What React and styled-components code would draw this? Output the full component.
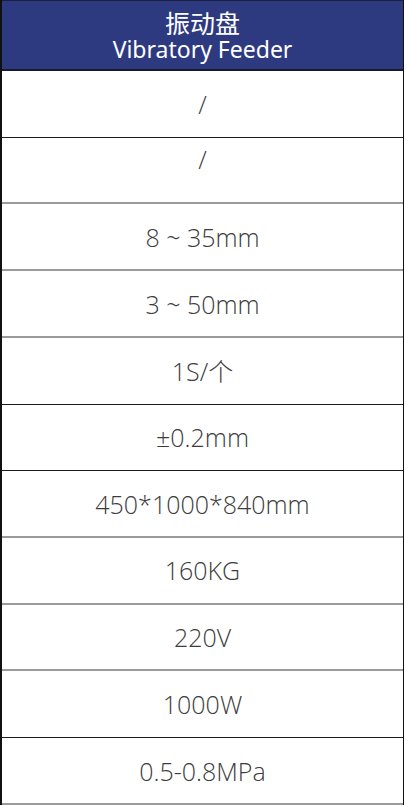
import React from "react";
import styled, { createGlobalStyle } from "styled-components";

const rows = [
  { value: "/", line: "dark" },
  { value: "/", line: "gray", top: true },
  { value: "8 ~ 35mm", line: "gray" },
  { value: "3 ~ 50mm", line: "gray" },
  { value: "1S/个", line: "dark" },
  { value: "±0.2mm", line: "dark" },
  { value: "450*1000*840mm", line: "gray" },
  { value: "160KG", line: "gray" },
  { value: "220V", line: "gray" },
  { value: "1000W", line: "dark" },
  { value: "0.5-0.8MPa", line: "gray" },
];

class App extends React.Component {
  render() {
    return (
      <>
        <GlobalStyle />
        <Table>
          <Header>
            <HeaderCn>振动盘</HeaderCn>
            <HeaderEn>Vibratory Feeder</HeaderEn>
          </Header>
          {rows.map((row, i) => (
            <Row key={i} $line={row.line} $top={row.top}>
              {row.value}
            </Row>
          ))}
        </Table>
      </>
    );
  }
}

const GlobalStyle = createGlobalStyle`
  body {
    margin: 0;
    background: #ffffff;
    font-family: "Noto Sans", "Noto Sans CJK SC", sans-serif;
  }
`;

const Table = styled.div`
  width: 404px;
  box-sizing: border-box;
  border-left: 2px solid #111111;
  border-right: 1px solid #111111;
  display: flex;
  flex-direction: column;
`;

const Header = styled.div`
  height: 71px;
  box-sizing: border-box;
  background: #2e3a80;
  border-top: 1px solid #1a1f40;
  border-bottom: 2px solid #151a33;
  display: flex;
  flex-direction: column;
  align-items: center;
  justify-content: center;
  gap: 1px;
  color: #ffffff;
`;

const HeaderCn = styled.div`
  font-family: "Noto Sans CJK SC", sans-serif;
  font-size: 25px;
  line-height: 26px;
`;

const HeaderEn = styled.div`
  font-family: "Noto Sans", "Noto Sans CJK SC", sans-serif;
  font-size: 23px;
  line-height: 26px;
`;

const Row = styled.div`
  height: 66.73px;
  box-sizing: border-box;
  display: flex;
  justify-content: center;
  align-items: ${(p) => (p.$top ? "flex-start" : "center")};
  padding-top: ${(p) => (p.$top ? "6px" : "0")};
  border-bottom: ${(p) =>
    p.$line === "dark" ? "1px solid #1a1a1a" : "2px solid #9a9a9a"};
  font-family: "Open Sans", "Noto Sans CJK SC", sans-serif;
  font-weight: 300;
  font-size: 25px;
  line-height: 30px;
  color: #3c3c3c;
`;

export default App;
